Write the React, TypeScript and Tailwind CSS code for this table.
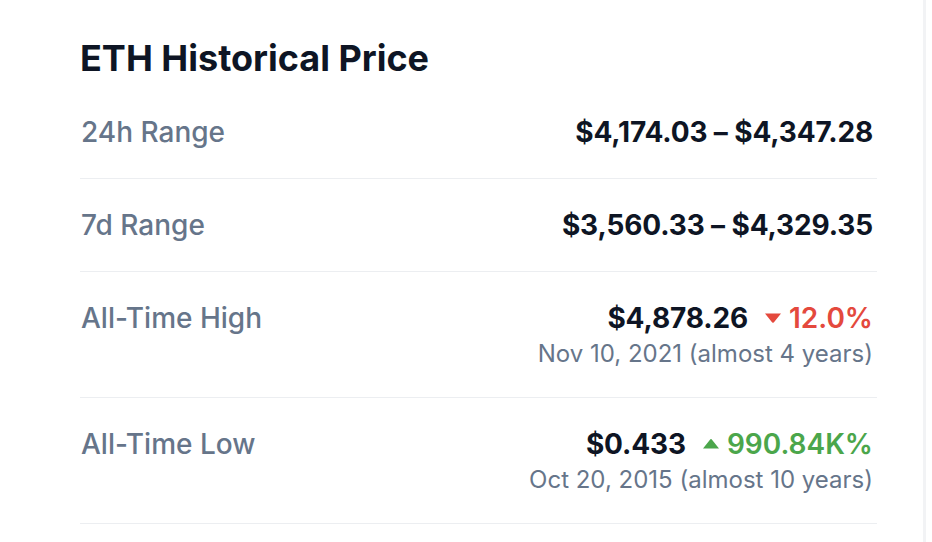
import { ReactNode } from "react";

type Change = { dir: "up" | "down"; value: string };

type Row = {
  label: string;
  value: string;
  change?: Change;
  note?: string;
};

const rows: Row[] = [
  { label: "24h Range", value: "$4,174.03 – $4,347.28" },
  { label: "7d Range", value: "$3,560.33 – $4,329.35" },
  {
    label: "All-Time High",
    value: "$4,878.26",
    change: { dir: "down", value: "12.0%" },
    note: "Nov 10, 2021 (almost 4 years)",
  },
  {
    label: "All-Time Low",
    value: "$0.433",
    change: { dir: "up", value: "990.84K%" },
    note: "Oct 20, 2015 (almost 10 years)",
  },
];

function Caret({ dir }: { dir: "up" | "down" }) {
  return (
    <svg width="18" height="12" viewBox="0 0 18 12" className="shrink-0">
      {dir === "down" ? (
        <path d="M1 1.5h16l-6.8 8.6a1.5 1.5 0 0 1-2.4 0z" fill="currentColor" />
      ) : (
        <path d="M1 10.5h16L10.2 1.9a1.5 1.5 0 0 0-2.4 0z" fill="currentColor" />
      )}
    </svg>
  );
}

function ChangeTag({ change }: { change: Change }) {
  const color = change.dir === "up" ? "text-[#4ba64b]" : "text-[#e4493d]";
  return (
    <span className={`flex items-center gap-[7px] font-semibold ${color}`}>
      <Caret dir={change.dir} />
      {change.value}
    </span>
  );
}

function StatRow({ row }: { row: Row }): ReactNode {
  return (
    <div className="flex justify-between border-b border-[#eceef1] pt-[28px] pb-[28px] has-[p]:pb-[25px]">
      <span className="text-[28px] leading-[36px] font-medium text-[#66758a] pl-px">
        {row.label}
      </span>
      <div className="flex flex-col items-end pr-1">
        <div className="flex items-center gap-[16px] text-[28px] leading-[36px]">
          <span className="font-bold text-[#0e1524] tracking-[-0.005em]">{row.value}</span>
          {row.change && <ChangeTag change={row.change} />}
        </div>
        {row.note && (
          <p className="text-[24px] leading-[36px] text-[#66758a]">{row.note}</p>
        )}
      </div>
    </div>
  );
}

export default function App() {
  return (
    <div
      className="flex h-[542px] w-[932px] bg-white"
      style={{ fontFamily: "Inter, 'Noto Sans', sans-serif" }}
    >
      <div className="flex-1 pl-[80px] pr-[46px] pt-[38px]">
        <h2 className="text-[36px] leading-[40px] font-bold text-[#0e1524] mb-[8px]">
          ETH Historical Price
        </h2>
        <div>
          {rows.map((r) => (
            <StatRow key={r.label} row={r} />
          ))}
        </div>
      </div>
      <div className="w-[9px] border-l-[3px] border-[#f2f3f5]" />
    </div>
  );
}
